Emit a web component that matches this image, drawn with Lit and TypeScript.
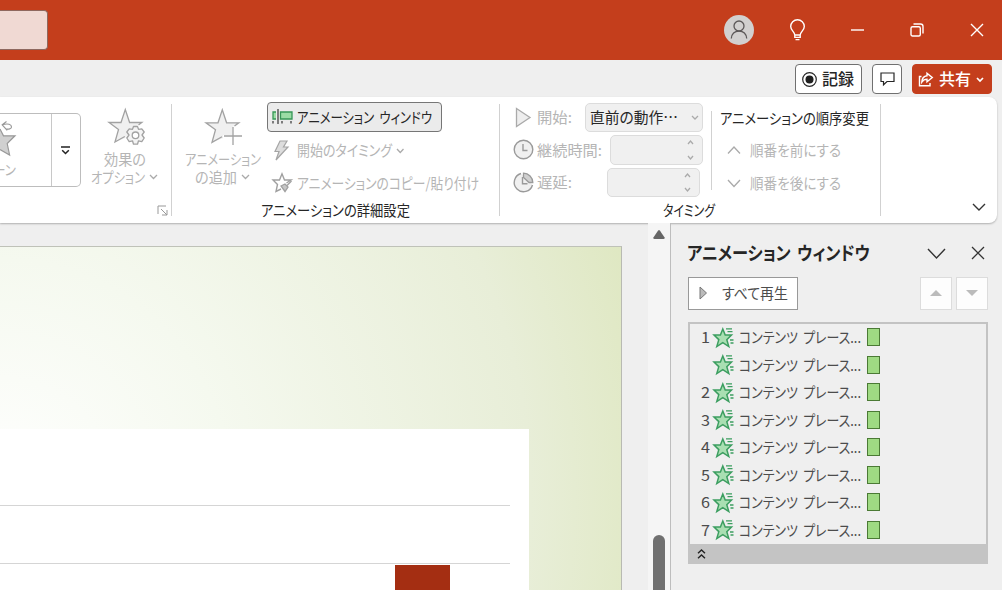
import { LitElement, html, css } from "lit";
import { customElement } from "lit/decorators.js";

const label = (text: string, width: number, size = 15, cls = "", height = 20) => html`
  <svg class="label ${cls}" width=${width} height=${height}>
    <text x="0" y=${height / 2 + size * 0.38} font-size=${size} textLength=${width} lengthAdjust="spacingAndGlyphs">${text}</text>
  </svg>`;

const chevron = (w: number, h: number, up = false, cls = "") => html`
  <svg class="chev ${cls}" width=${w + 2} height=${h + 2} viewBox="-1 -1 ${w + 2} ${h + 2}">
    <path d=${up ? `M0 ${h} L${w / 2} 0 L${w} ${h}` : `M0 0 L${w / 2} ${h} L${w} 0`}></path>
  </svg>`;

@customElement("app-root")
export class AppRoot extends LitElement {
  static styles = css`
    :host { display: flex; flex-direction: column; width: 1002px; height: 590px; overflow: hidden; background: #efefef; font-family: "Noto Sans CJK JP", sans-serif; color: #262626; }
    * { box-sizing: border-box; }
    svg { display: block; flex: none; overflow: visible; }
    .label { fill: #262626; font-feature-settings: "palt"; word-spacing: 3px; }
    .dim { fill: #b5b5b5; }
    .bold { font-weight: 700; }
    .semi { font-weight: 500; }
    .inv { fill: #fff; font-weight: 500; }
    .item { fill: #4c4c4c; }
    .chev { fill: none; stroke: #aaa; stroke-width: 1.3; }
    .dark { stroke: #333; stroke-width: 1.4; }
    .white { stroke: #fff; stroke-width: 1.7; }
    .line { fill: none; stroke: #fff; stroke-width: 1.4; }
    .titlebar { height: 60px; flex: none; background: #c43e1c; display: flex; justify-content: space-between; }
    .search { width: 48px; height: 40px; margin-top: 10px; background: #f0d9d3; border: 1px solid #8f685e; border-left: 0; border-radius: 0 4px 4px 0; }
    .winbtns { display: flex; align-items: center; padding-right: 18px; }
    .g1 { margin-left: 35px; }
    .g2 { margin-left: 45px; }
    .g3 { margin-left: 46px; }
    .tabs { height: 37px; flex: none; display: flex; justify-content: flex-end; align-items: flex-start; gap: 10px; padding: 4px 10px 0 0; }
    .tabbtn { height: 30px; display: flex; align-items: center; justify-content: center; background: #fff; border: 1px solid #707070; border-radius: 4px; }
    .rec { width: 67px; gap: 5px; padding-right: 2px; }
    .comment { width: 30px; }
    .share { width: 80px; background: #c43e1c; border-color: #c43e1c; gap: 5px; padding-right: 2px; }
    .ribbon { width: 997px; height: 126px; flex: none; background: #fff; border-radius: 0 8px 8px 0; box-shadow: 0 1px 2px #0004; display: flex; padding-top: 7px; }
    .group { height: 112px; border-right: 1px solid #d1d1d1; display: flex; flex: none; }
    .ga { width: 172px; }
    .gb { width: 328px; flex-direction: column; }
    .gc { width: 381px; flex-direction: column; }
    .gallery { width: 81px; height: 74px; margin-top: 9px; border: 1px solid #bdbdbd; border-left: 0; border-radius: 0 5px 5px 0; display: flex; flex: none; overflow: hidden; }
    .gitem { width: 52px; flex: none; border-right: 1px solid #c8c8c8; padding-top: 4px; }
    .gitem .label { margin: 1px 0 0 -7px; }
    .more { flex: 1; display: flex; align-items: center; justify-content: center; padding-right: 1px; }
    .big { display: flex; flex-direction: column; align-items: center; flex: none; }
    .big .pic { margin: 4px 0 4px 3px; }
    .opt { width: 88px; }
    .optline { display: flex; align-items: center; gap: 4px; margin-left: -1px; }
    .launch { align-self: flex-end; margin-left: -12px; }
    .cols { display: flex; height: 96px; flex: none; }
    .add { width: 77px; margin-left: 12px; }
    .rows { display: flex; flex-direction: column; }
    .row { display: flex; align-items: center; height: 32.5px; flex: none; }
    .brows { margin-left: 6px; margin-top: -2px; }
    .pressed { width: 175px; height: 30px; margin-bottom: 2px; border: 1px solid #767676; border-radius: 4px; background: #ebebeb; display: flex; align-items: center; padding-left: 4px; gap: 4px; flex: none; }
    .pad { padding-left: 5px; gap: 4px; }
    .crows { margin-left: 13px; margin-top: -3px; width: 190px; }
    .ic { margin-right: 3px; }
    .field { background: #f0f0f0; border: 1px solid #dcdcdc; border-radius: 5px; height: 29.5px; display: flex; align-items: center; margin-left: auto; }
    .combo { width: 118px; padding: 0 3px 0 4px; justify-content: space-between; }
    .spin { width: 93px; flex-direction: column; align-items: flex-end; justify-content: space-between; padding: 4px 8px; }
    .delay { margin-right: 3px; }
    .ordersep { width: 1px; height: 79px; margin: 7px 0 0 8px; background: #d1d1d1; }
    .orders { margin: -2.5px 0 0 7.5px; }
    .obtn { padding-left: 7.5px; gap: 9px; }
    .foot { display: flex; justify-content: center; height: 20px; }
    .fb { margin-left: -1px; }
    .fc { padding-right: 2px; }
    .collapse { margin: 99px 0 0 91px; }
    .work { flex: 1; display: flex; min-height: 0; }
    .canvas { width: 648px; padding-top: 23px; display: flex; }
    .slide { width: 622px; border-top: 1px solid #bfc2b8; border-right: 1px solid #b8bab2; padding-top: 182px; background: radial-gradient(ellipse 680px 700px at 0 250px, #fff 0%, #f5f9ef 34%, #e8eed8 78%, #dee7c0 100%); }
    .chart { width: 528.5px; height: 162px; background: #fff; padding-top: 76px; }
    .grid1 { width: 510px; height: 58.5px; border-top: 1px solid #d5d5d5; border-bottom: 1px solid #d5d5d5; }
    .bar { width: 55px; height: 26px; margin: 1.5px 0 0 394.5px; background: #a42e12; }
    .scroll { width: 22px; background: #f5f5f5; display: flex; flex-direction: column; align-items: center; justify-content: space-between; padding-top: 7px; }
    .thumb { width: 12px; height: 55px; background: #707070; border-radius: 6px 6px 0 0; }
    .pane { width: 332px; border-left: 1px solid #bdbdbd; padding: 20px 14px 0 17px; }
    .phead { height: 20px; display: flex; align-items: center; margin-left: -1px; }
    .pv { margin-left: 57px; }
    .px { margin-left: 25px; }
    .ptools { display: flex; margin-top: 14px; gap: 4px; height: 32.5px; }
    .play { width: 110px; border: 1px solid #999; background: #fff; display: flex; align-items: center; padding: 0 9px 1px 10px; justify-content: space-between; }
    .mv { width: 32px; background: #fdfdfd; border: 1px solid #dcdcdc; display: flex; align-items: center; justify-content: center; }
    .up { margin-left: auto; }
    .list { width: 300px; height: 242px; margin-top: 12px; border: 2px solid #c3c3c3; border-bottom: 0; display: flex; flex-direction: column; }
    .entries { flex: 1; }
    .entry { display: flex; align-items: center; height: 27.5px; padding-left: 10.5px; }
    .num { width: 12px; }
    .star { margin-right: 5px; }
    .eff { width: 13px; height: 18px; border: 1.5px solid #4b7a35; background: #9fda83; margin-left: 6.5px; }
    .lfoot { height: 20px; background: #c4c4c4; margin: 0 -2px; display: flex; align-items: center; padding-left: 10px; }
  `;

  private entry(n: string) {
    return html`<div class="entry">
      <div class="num">${n ? label(n, 9, 15, "item") : ""}</div>
      <svg class="star" width="21" height="21" viewBox="0 0 21 21">
        <path d="M9.8 2 L12.2 8 L18.5 8 L13.8 12.6 L15.8 19.6 L9.8 15.6 L3.8 19.6 L5.8 12.6 L1 8 L7.4 8 Z" fill="#a9dfb2" stroke="#3c9e60" stroke-width="1.5"/>
        <path d="M13 1.8h6M14.5 4.7h5M17 13h3.5M17.5 16h3" stroke="#3c9e60" stroke-width="1.3"/>
      </svg>
      ${label("コンテンツ プレース...", 122, 15, "item")}
      <div class="eff"></div>
    </div>`;
  }

  private spin(cls: string) {
    return html`<div class="field spin ${cls}">${chevron(5, 3, true)}${chevron(5, 3)}</div>`;
  }

  render() {
    return html`
      <div class="titlebar">
        <div class="search"></div>
        <div class="winbtns">
          <svg width="30" height="30" viewBox="0 0 30 30">
            <circle cx="15" cy="15" r="15" fill="#d2d0cf"/>
            <g fill="none" stroke="#5c5858" stroke-width="1.3"><circle cx="15" cy="11" r="5"/><path d="M7.3 23.5C7.8 18.5 10.6 16.2 15 16.2S22.2 18.5 22.7 23.5"/></g>
          </svg>
          <svg class="line g1" width="17" height="22" viewBox="0 0 17 22"><path d="M5.8 16C5.6 12.6 1.7 11.4 1.7 7.6A6.8 6.8 0 0 1 15.3 7.6C15.3 11.4 11.4 12.6 11.2 16ZM5.8 16V18.4H11.2V16M6.5 20.6H10.5"/></svg>
          <svg class="line g2" width="13" height="13"><path d="M0 6H13"/></svg>
          <svg class="line g3" width="14" height="14" viewBox="0 0 14 14"><rect x="1" y="3.7" width="9.3" height="9.3" rx="1.5"/><path d="M3.5 1H10.5Q13 1 13 3.5V10.5"/></svg>
          <svg class="line g3" width="14" height="14" viewBox="0 0 14 14"><path d="M1 1L13 13M13 1L1 13"/></svg>
        </div>
      </div>

      <div class="tabs">
        <div class="tabbtn rec">
          <svg width="15" height="15" viewBox="0 0 15 15"><circle cx="7.5" cy="7.5" r="6.8" fill="none" stroke="#262626" stroke-width="1.2"/><circle cx="7.5" cy="7.5" r="4" fill="#1f1f1f"/></svg>
          ${label("記録", 32, 16, "semi")}
        </div>
        <div class="tabbtn comment">
          <svg width="15" height="14" viewBox="0 0 15 14"><path d="M1 1H14V9.5H7L3.5 12.8V9.5H1Z" fill="none" stroke="#262626" stroke-width="1.2"/></svg>
        </div>
        <div class="tabbtn share">
          <svg class="line" width="16" height="15" viewBox="0 0 16 15"><path d="M3.5 4.5H1.5V13.7H12V11M9 1.2L14.3 5.6L9 9.8V7.2C6.8 7.2 5 8.2 3.8 10C4 6.5 6 4.2 9 3.8Z"/></svg>
          ${label("共有", 32, 16, "inv")}
          ${chevron(6, 3, false, "white")}
        </div>
      </div>

      <div class="ribbon">
        <div class="group ga">
          <div class="gallery">
            <div class="gitem">
              <svg width="17" height="42" viewBox="0 118 17 42">
                <path d="M0 129 L3.5 135.8 L15 135.8 L7.2 143.5 L9.6 155 L0 149.5 Z" fill="#d0d0d0"/>
                <path d="M0 129 L3.5 135.8 L15 135.8 L7.2 143.5 L9.6 155 L0 149.5" fill="none" stroke="#999" stroke-width="1.2"/>
                <path d="M6.5 121.5L2.2 124.8L7.2 130.3M2.5 124.8C8 123 11.5 124.5 11.5 127C11.3 129 8.5 129.6 5.8 128.8" fill="none" stroke="#999" stroke-width="1.2"/>
              </svg>
              ${label("ーン", 23, 14, "dim", 18)}
            </div>
            <div class="more"><svg width="9" height="9" viewBox="0 0 9 9"><path d="M0 1H9M1.2 4.2L4.5 7.5L7.8 4.2" fill="none" stroke="#222" stroke-width="1.5"/></svg></div>
          </div>
          <div class="big opt">
            <svg class="pic" width="38" height="38" viewBox="0 0 38 38">
              <path d="M16.8 30.3L7 34L10.5 21.6L1 14.5H13L17.3 1.5L21.6 14.5H33.8L28.5 18" fill="#f0f0f0"/>
              <path d="M16.8 28.5L7 34L10.5 21.6L1 14.5H13L17.3 1.5L21.6 14.5H33.8L30.5 17" fill="none" stroke="#a2a2a2" stroke-width="1.3"/>
              <path d="M25.5 18.5L29.5 18.5L30.5 21.3L33.8 20.8L36.2 24L34 27L36.2 30L33.8 33.6L30.5 32.8L29.5 36.2H25.5L24.5 32.8L21.2 33.6L18.8 30L21 27L18.8 24L21.2 20.8L24.5 21.3Z" fill="#f4f4f4" stroke="#a2a2a2" stroke-width="1.3" stroke-linejoin="round"/><circle cx="27.5" cy="27.3" r="3.3" fill="#fff" stroke="#a2a2a2" stroke-width="1.3"/>
            </svg>
            ${label("効果の", 42, 14.5, "dim", 18)}
            <div class="optline">${label("オプション", 54, 14.5, "dim", 18)}${chevron(7, 3.5)}</div>
          </div>
          <svg class="launch" width="11" height="11" viewBox="0 0 11 11"><path d="M1 9V1H9M4 4L10 10M10 5V10H5" fill="none" stroke="#999"/></svg>
        </div>

        <div class="group gb">
          <div class="cols">
            <div class="big add">
              <svg class="pic" width="38" height="38" viewBox="0 0 38 38">
                <path d="M18 30.3L7 34.3L10.5 21.8L1 14.8H13L17.3 1.8L21.6 14.8H33.8L27.5 19V27H18Z" fill="#f0f0f0"/>
                <path d="M17 28.7L7 34.3L10.5 21.8L1 14.8H13L17.3 1.8L21.6 14.8H33.8L29.5 18M28 19V37M19 28H37" fill="none" stroke="#a2a2a2" stroke-width="1.3"/>
              </svg>
              ${label("アニメーション", 76, 14.5, "dim", 18)}
              <div class="optline">${label("の追加", 42, 14.5, "dim", 18)}${chevron(7, 3.5)}</div>
            </div>
            <div class="rows brows">
              <div class="pressed">
                <svg width="21" height="16" viewBox="0 0 21 16"><path d="M4 3H1V10H4M8.5 3H20V10H8.5Z" fill="#9bdca5" stroke="#379657" stroke-width="1.3"/><path d="M6 0V15M1 12V14.5M10 12V14.5M19 12V14.5" stroke="#333" stroke-width="1.2"/></svg>
                ${label("アニメーション ウィンドウ", 135)}
              </div>
              <div class="row pad">
                <svg width="21" height="21" viewBox="0 0 21 21"><path d="M8 1H15L11.5 7H16L4 20L7 11.5H3Z" fill="#ddd" stroke="#a5a5a5" stroke-width="1.2"/></svg>
                ${label("開始のタイミング", 95, 15, "dim")}${chevron(6.5, 3.5)}
              </div>
              <div class="row pad">
                <svg width="21" height="21" viewBox="0 0 21 21"><path d="M9 17L4 19.5L5.5 12.5L1 8H7.5L10 1.8L12.5 8H19L14.5 11" fill="none" stroke="#a0a0a0" stroke-width="1.4"/><path d="M19.5 9L15 13.5M9 14L13 12L16 15L13 19.5Z" fill="#c6c6c6" stroke="#a0a0a0" stroke-width="1.3"/></svg>
                ${label("アニメーションのコピー/貼り付け", 182, 15, "dim")}
              </div>
            </div>
          </div>
          <div class="foot fb">${label("アニメーションの詳細設定", 149)}</div>
        </div>

        <div class="group gc">
          <div class="cols">
            <div class="rows crows">
              <div class="row">
                <svg class="ic" width="21" height="21" viewBox="0 0 21 21"><path d="M3.5 1.5L17 10.5L3.5 19.5Z" fill="#eee" stroke="#aaa" stroke-width="1.3"/></svg>
                ${label("開始:", 35, 15, "dim")}
                <div class="field combo">${label("直前の動作…", 88)}${chevron(6, 3)}</div>
              </div>
              <div class="row">
                <svg class="ic" width="21" height="21" viewBox="0 0 21 21"><circle cx="10.5" cy="10.5" r="9.3" fill="#f0f0f0" stroke="#9a9a9a" stroke-width="1.4"/><path d="M10 5V11.5H14.5" fill="none" stroke="#9a9a9a" stroke-width="1.4"/></svg>
                ${label("継続時間:", 65, 15, "dim")}
                ${this.spin("")}
              </div>
              <div class="row">
                <svg class="ic" width="21" height="21" viewBox="0 0 21 21"><path d="M8 1.5A9.3 9.3 0 1 0 19.5 13" fill="#f0f0f0" stroke="#9a9a9a" stroke-width="1.4"/><path d="M10.5 1.2A9.3 9.3 0 0 1 19.8 10.5H16L10.5 5.5Z" fill="#d0d0d0" stroke="#9a9a9a" stroke-width="1.3"/><path d="M9.5 5V11.8H14.5" fill="none" stroke="#9a9a9a" stroke-width="1.4"/></svg>
                ${label("遅延:", 35, 15, "dim")}
                ${this.spin("delay")}
              </div>
            </div>
            <div class="ordersep"></div>
            <div class="rows orders">
              <div class="row">${label("アニメーションの順序変更", 149)}</div>
              <div class="row obtn">${chevron(12, 6.5, true)}${label("順番を前にする", 91, 15, "dim")}</div>
              <div class="row obtn">${chevron(12, 6.5)}${label("順番を後にする", 91, 15, "dim")}</div>
            </div>
          </div>
          <div class="foot fc">${label("タイミング", 52)}</div>
        </div>
        <div class="collapse">${chevron(12, 6, false, "dark")}</div>
      </div>

      <div class="work">
        <div class="canvas">
          <div class="slide"><div class="chart"><div class="grid1"></div><div class="bar"></div></div></div>
        </div>
        <div class="scroll">
          <svg width="12" height="9"><path d="M5 0.8Q6 -0.6 7 0.8L11.6 7.4Q12 9 10.5 9H1.5Q0 9 0.4 7.4Z" fill="#666"/></svg>
          <div class="thumb"></div>
        </div>
        <div class="pane">
          <div class="phead">
            ${label("アニメーション ウィンドウ", 183, 18.5, "bold")}
            <div class="pv">${chevron(17, 9, false, "dark")}</div>
            <svg class="px" width="14" height="14" viewBox="0 0 14 14"><path d="M1 1L13 13M13 1L1 13" fill="none" stroke="#333" stroke-width="1.3"/></svg>
          </div>
          <div class="ptools">
            <div class="play">
              <svg width="8" height="14" viewBox="0 0 8 14"><path d="M1 1L7.5 7L1 13Z" fill="#bbb" stroke="#777"/></svg>
              ${label("すべて再生", 66, 15, "item")}
            </div>
            <div class="mv up"><svg width="12" height="6"><path d="M6 0L12 6H0Z" fill="#bbb"/></svg></div>
            <div class="mv"><svg width="12" height="6"><path d="M6 6L12 0H0Z" fill="#bbb"/></svg></div>
          </div>
          <div class="list">
            <div class="entries">${["1", "", "2", "3", "4", "5", "6", "7"].map((n) => this.entry(n))}</div>
            <div class="lfoot"><svg width="7" height="10" viewBox="0 0 7 10"><path d="M0 4.2L3.5 1L7 4.2M0 9.2L3.5 6L7 9.2" fill="none" stroke="#222" stroke-width="1.4"/></svg></div>
          </div>
        </div>
      </div>
    `;
  }
}
